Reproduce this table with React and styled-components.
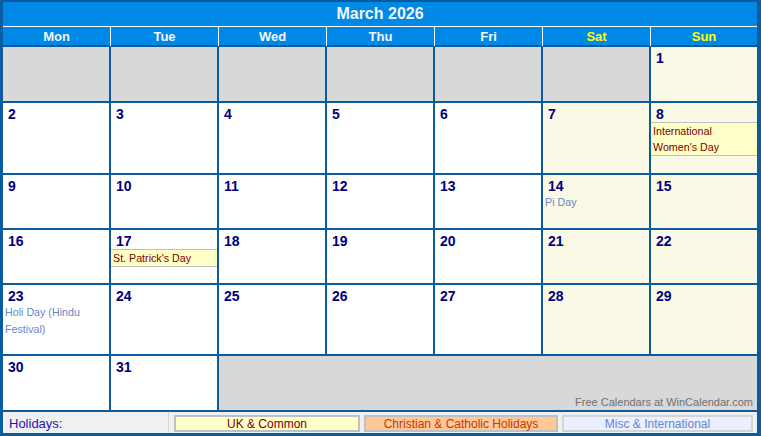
import React from "react";
import styled, { createGlobalStyle } from "styled-components";

const GlobalStyle = createGlobalStyle`
	html, body {
		margin: 0;
		padding: 0;
		background: #ffffff;
	}
	body {
		font-family: "Liberation Sans", Arial, sans-serif;
	}
`;

const DAYS = ["Mon", "Tue", "Wed", "Thu", "Fri", "Sat", "Sun"];

const WEEKS = [
	[null, null, null, null, null, null, { d: 1 }],
	[{ d: 2 }, { d: 3 }, { d: 4 }, { d: 5 }, { d: 6 }, { d: 7 }, { d: 8, h: "International Women's Day", k: "uk" }],
	[{ d: 9 }, { d: 10 }, { d: 11 }, { d: 12 }, { d: 13 }, { d: 14, h: "Pi Day", k: "misc" }, { d: 15 }],
	[{ d: 16 }, { d: 17, h: "St. Patrick's Day", k: "uk" }, { d: 18 }, { d: 19 }, { d: 20 }, { d: 21 }, { d: 22 }],
	[{ d: 23, h: "Holi Day (Hindu Festival)", k: "misc" }, { d: 24 }, { d: 25 }, { d: 26 }, { d: 27 }, { d: 28 }, { d: 29 }],
];

const App = () => {
	return (
		<>
			<GlobalStyle />
			<Calendar>
				<Title>March 2026</Title>
				<HeaderRow>
					{DAYS.map((name, i) => (
						<DayName key={name} $first={i === 0} $weekend={i > 4}>
							{name}
						</DayName>
					))}
				</HeaderRow>
				<Grid>
					{WEEKS.map((week, w) =>
						week.map((day, i) =>
							day ? (
								<Cell key={`${w}-${i}`} $tone={i > 4 ? "weekend" : "normal"}>
									<DateNum>{day.d}</DateNum>
									{day.h && <Holiday $kind={day.k}>{day.h}</Holiday>}
								</Cell>
							) : (
								<Cell key={`${w}-${i}`} $tone="empty" />
							)
						)
					)}
					<Cell $tone="normal">
						<DateNum>30</DateNum>
					</Cell>
					<Cell $tone="normal">
						<DateNum>31</DateNum>
					</Cell>
					<Filler>Free Calendars at WinCalendar.com</Filler>
				</Grid>
				<Legend>
					<LegendLabel>Holidays:</LegendLabel>
					<LegendItem $kind="uk" $w={186}>UK &amp; Common</LegendItem>
					<LegendItem $kind="christian" $w={194}>Christian &amp; Catholic Holidays</LegendItem>
					<LegendItem $kind="misc" $w={191}>Misc &amp; International</LegendItem>
				</Legend>
			</Calendar>
		</>
	);
};

const Calendar = styled.div`
	width: 761px;
	height: 436px;
	box-sizing: border-box;
	padding: 2px 4px 3px 3px;
	background: #0a5ca0;
	display: flex;
	flex-direction: column;
`;

const Title = styled.div`
	height: 24px;
	line-height: 24px;
	background: #0088e6;
	border-bottom: 1px solid #ffffff;
	color: #f4f6ff;
	font-size: 16px;
	font-weight: bold;
	text-align: center;
`;

const HeaderRow = styled.div`
	display: grid;
	grid-template-columns: 107px repeat(5, 108px) 107px;
	height: 18px;
	background: #0088e6;
`;

const DayName = styled.div`
	border-left: ${(p) => (p.$first ? "none" : "1px solid #ffffff")};
	color: ${(p) => (p.$weekend ? "#ffff00" : "#f4f6ff")};
	font-size: 13px;
	font-weight: bold;
	line-height: 19px;
	text-align: center;
`;

const Grid = styled.div`
	margin-top: 2px;
	display: grid;
	grid-template-columns: repeat(7, 106px);
	grid-template-rows: 54px 70px 53px 53px 69px 54px;
	gap: 2px;
`;

const tones = {
	empty: "#d8d8d8",
	weekend: "#faf9e5",
	normal: "#ffffff",
};

const Cell = styled.div`
	background: ${(p) => tones[p.$tone]};
	overflow: hidden;
`;

const DateNum = styled.div`
	padding: 4px 0 0 5px;
	height: 15px;
	line-height: 15px;
	font-size: 14px;
	font-weight: bold;
	color: #000080;
`;

const Holiday = styled.div`
	padding-left: 2px;
	font-size: 10.7px;
	line-height: ${(p) => (p.$kind === "uk" ? "16px" : "17px")};
	color: ${(p) => (p.$kind === "uk" ? "#7a0000" : "#6688c8")};
	background: ${(p) => (p.$kind === "uk" ? "#ffffc8" : "transparent")};
	border-top: ${(p) => (p.$kind === "uk" ? "1px solid #c0c0c0" : "none")};
	border-bottom: ${(p) => (p.$kind === "uk" ? "1px solid #c0c0c0" : "none")};
`;

const Filler = styled.div`
	grid-column: span 5;
	background: #d8d8d8;
	display: flex;
	align-items: flex-end;
	justify-content: flex-end;
	padding: 0 4px 2px 0;
	font-size: 11px;
	color: #707070;
`;

const Legend = styled.div`
	margin-top: 2px;
	height: 21px;
	background: #f0f0f0;
	display: flex;
	align-items: center;
`;

const LegendLabel = styled.div`
	width: 159px;
	height: 100%;
	padding-left: 6px;
	border-right: 1px solid #d6d6d6;
	font-size: 13px;
	line-height: 23px;
	color: #2a12b8;
`;

const legendColors = {
	uk: { bg: "#ffffc8", fg: "#7a0000", border: "#c0c0c0" },
	christian: { bg: "#ffc896", fg: "#c03c08", border: "#c0c0c0" },
	misc: { bg: "#eaf0ff", fg: "#6686d2", border: "#d4d4d4" },
};

const LegendItem = styled.div`
	box-sizing: border-box;
	width: ${(p) => p.$w}px;
	height: 17px;
	margin: 2px 0 0 ${(p) => (p.$kind === "uk" ? "5px" : "4px")};
	border: 2px solid ${(p) => legendColors[p.$kind].border};
	background: ${(p) => legendColors[p.$kind].bg};
	color: ${(p) => legendColors[p.$kind].fg};
	font-size: 12px;
	line-height: 14px;
	text-align: center;
`;

export default App;
